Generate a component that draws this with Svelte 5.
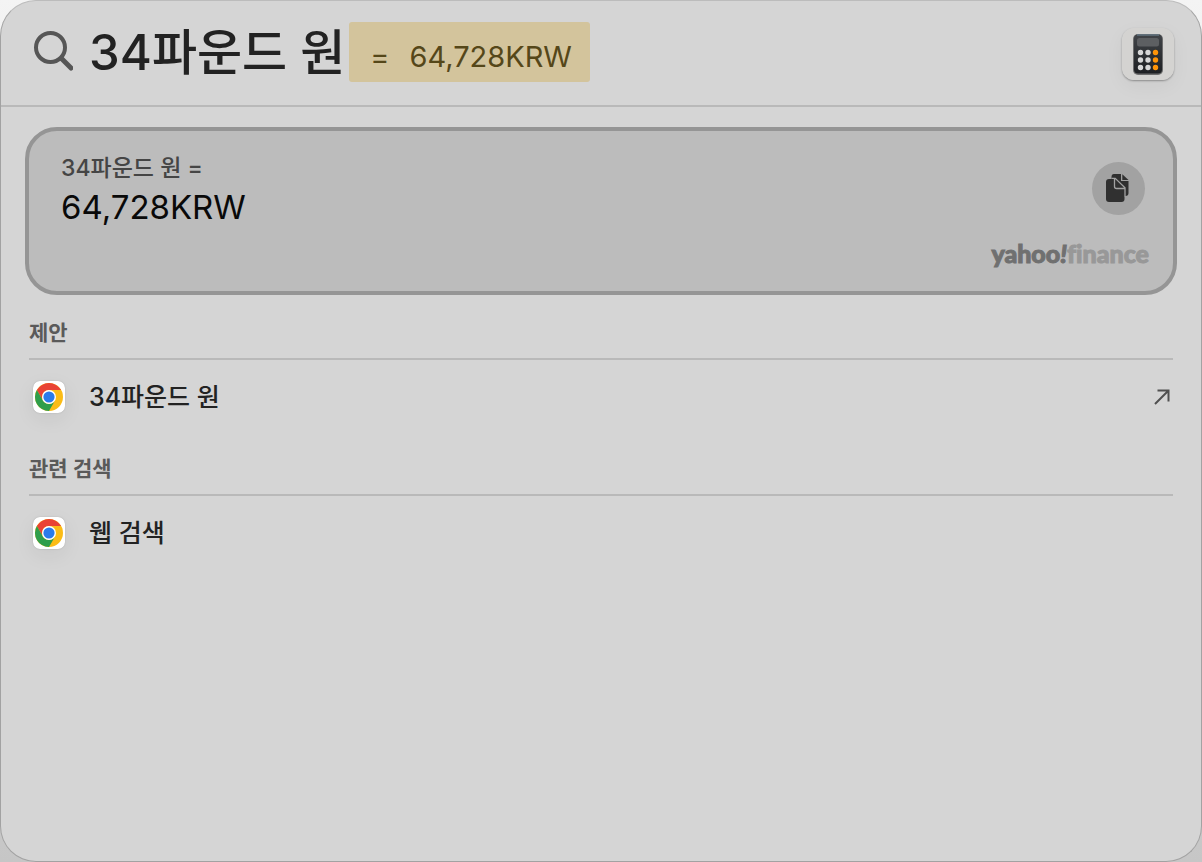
<script>
  let query = $state('34파운드 원');
  const result = '64,728KRW';
  const sections = [
    { title: '제안', label: '34파운드 원', arrow: true },
    { title: '관련 검색', label: '웹 검색', arrow: false }
  ];
</script>

{#snippet chrome()}
  <svg class="chrome" viewBox="0 0 32 32" aria-hidden="true">
    <rect width="32" height="32" rx="7" fill="#fff" />
    <circle cx="16" cy="16" r="14" fill="#fbbc16" />
    <path d="M3.88 9A14 14 0 0 1 28.12 9H16A7 7 0 0 0 9.94 19.5Z" fill="#e94335" />
    <path d="M3.88 9A14 14 0 0 0 16 30L22.06 19.5A7 7 0 0 1 9.94 19.5Z" fill="#2f9e4b" />
    <circle cx="16" cy="16" r="7" fill="#fff" />
    <circle cx="16" cy="16" r="5.6" fill="#2b7bea" />
  </svg>
{/snippet}

<main class="panel">
  <header class="search">
    <svg class="glass" viewBox="0 0 40 42" aria-hidden="true">
      <circle cx="17.500" cy="17.500" r="14.500" fill="none" stroke="#565656" stroke-width="4" />
      <path d="M28.500 28.500L38 38" fill="none" stroke="#565656" stroke-width="5" stroke-linecap="round" />
    </svg>
    <input class="query" type="text" aria-label="검색" size="8" spellcheck="false" bind:value={query} />
    <output class="completion"><span>=</span><span>{result}</span></output>
    <svg class="calculator" viewBox="0 0 52 52" aria-hidden="true">
      <defs>
        <linearGradient id="body" x1="0" y1="0" x2="0" y2="1">
          <stop offset="0" stop-color="#414448" />
          <stop offset="1" stop-color="#1e2023" />
        </linearGradient>
      </defs>
      <rect width="52" height="52" rx="12" fill="#d4d3d1" />
      <rect x="11" y="6" width="30" height="41" rx="5" fill="#18191b" opacity=".55" />
      <rect x="12" y="6.500" width="28" height="39" rx="4" fill="url(#body)" />
      <path d="M15 7H37" stroke="#71899a" stroke-width="1" />
      <rect x="15" y="10" width="22" height="8.500" rx="2.500" fill="#5d5f62" />
      {#each [24.5, 32, 39.5] as y}
        <circle cx="18.500" cy={y} r="2.700" fill="#d8d8d8" />
        <circle cx="26" cy={y} r="2.700" fill="#d8d8d8" />
        <circle cx="33.500" cy={y} r="2.700" fill="#ff9408" />
      {/each}
    </svg>
  </header>

  <section class="card">
    <div class="answer">
      <p class="question">{query} =</p>
      <p class="value">{result}</p>
    </div>
    <div class="side">
      <button class="copy" type="button" aria-label="복사">
        <svg viewBox="0 0 24 28" aria-hidden="true">
          <path d="M8 0H15V7H22.500V19Q22.500 22 19.500 22H8Q5.500 22 5.500 20V3Q5.500 0 8 0Z" fill="#303030" />
          <path d="M16.300 0.300L22.500 6H16.300Z" fill="#303030" />
          <path d="M3 5H9L18.500 14V25Q18.500 28 15.500 28H3Q0 28 0 25V8Q0 5 3 5Z" fill="#303030" />
          <path d="M5.500 4.400H9.200L19 13.800V22.500M8.500 5V12.500Q8.500 14.500 10.500 14.500H18.500" fill="none" stroke="#a2a2a2" stroke-width="1.300" />
        </svg>
      </button>
      <div class="source"><span class="yahoo">yahoo<i>!</i></span><span>finance</span></div>
    </div>
  </section>

  {#each sections as section}
    <section class="group">
      <h2>{section.title}</h2>
      <button class="row" type="button">
        {@render chrome()}
        <span>{section.label}</span>
        {#if section.arrow}
          <svg class="arrow" viewBox="0 0 16 16" aria-hidden="true">
            <path d="M1 15L14.500 1.500M3.500 1.500H14.500V12.500" fill="none" stroke="#505050" stroke-width="2" />
          </svg>
        {/if}
      </button>
    </section>
  {/each}
</main>

<style>
  :global(body) {
    margin: 0;
    background: linear-gradient(#f4f4f4, #c6c6c6);
  }
  .panel {
    box-sizing: border-box;
    min-height: 100vh;
    border: 1px solid #a2a2a2;
    border-top-color: #bcbcbc;
    border-radius: 36px;
    background: #d5d5d5;
    color: #222;
    font-family: Inter, "Noto Sans CJK KR", sans-serif;
  }
  .search {
    display: flex;
    align-items: center;
    height: 104px;
    padding: 0 27px 0 32px;
    border-bottom: 2px solid #b9b9b9;
  }
  .glass {
    flex: none;
    width: 40px;
    height: 42px;
    margin-right: 16px;
    margin-bottom: 4px;
  }
  .query {
    field-sizing: content;
    height: 72px;
    padding: 0;
    margin: 0 4px 0 0;
    border: 0;
    outline: 0;
    background: none;
    color: #222;
    font: 500 49px/72px Inter, "Noto Sans CJK KR", sans-serif;
  }
  .completion {
    display: flex;
    gap: 20px;
    margin-bottom: 2px;
    padding: 10px 18px 0 21px;
    border-radius: 3px;
    background: #d3c49c;
    color: #554719;
    font-size: 29px;
    line-height: 50px;
  }
  .calculator {
    flex: none;
    width: 52px;
    height: 52px;
    margin-top: 2px;
    margin-left: auto;
    border-radius: 12px;
    box-shadow: 0 1px 2px #0005, 0 6px 20px #0000000c;
  }
  .card {
    display: flex;
    justify-content: space-between;
    margin: 20px 24px 3px;
    padding: 19px 24px 24px 32px;
    border: 4px solid #959595;
    border-radius: 32px;
    background: #bcbcbc;
  }
  p {
    margin: 0;
  }
  .question {
    color: #454545;
    font-size: 23px;
    font-weight: 500;
    line-height: 36px;
  }
  .value {
    color: #090909;
    font-size: 33px;
    line-height: 42px;
  }
  .side {
    display: flex;
    flex-direction: column;
    align-items: flex-end;
    justify-content: space-between;
    min-height: 117px;
  }
  .copy {
    display: grid;
    place-items: center;
    width: 53px;
    height: 53px;
    margin: 12px 4px 0 0;
    padding: 0 2px 2px 0;
    border: 0;
    border-radius: 50%;
    background: #a2a2a2;
  }
  .copy svg {
    width: 24px;
    height: 28px;
  }
  .source {
    color: #989898;
    font: 900 25px/28px Lato, sans-serif;
    font-variant-ligatures: none;
    -webkit-text-stroke: 1px currentColor;
  }
  .yahoo {
    color: #707070;
  }
  .group {
    padding: 0 28px;
  }
  h2 {
    margin: 0;
    padding-top: 10px;
    border-bottom: 2px solid #b9b9b9;
    color: #5a5a5a;
    font-size: 21px;
    font-weight: 600;
    line-height: 50px;
  }
  .row {
    display: flex;
    align-items: center;
    width: 100%;
    height: 74px;
    padding: 0 3px 0 4px;
    border: 0;
    background: none;
    color: #222;
    font: 500 25px/36px Inter, "Noto Sans CJK KR", sans-serif;
  }
  .chrome {
    width: 32px;
    height: 32px;
    margin-right: 24px;
    border-radius: 7px;
    box-shadow: 0 0 2px #0002, 0 6px 20px #00000010;
  }
  .arrow {
    width: 16px;
    height: 16px;
    margin-left: auto;
  }
</style>
